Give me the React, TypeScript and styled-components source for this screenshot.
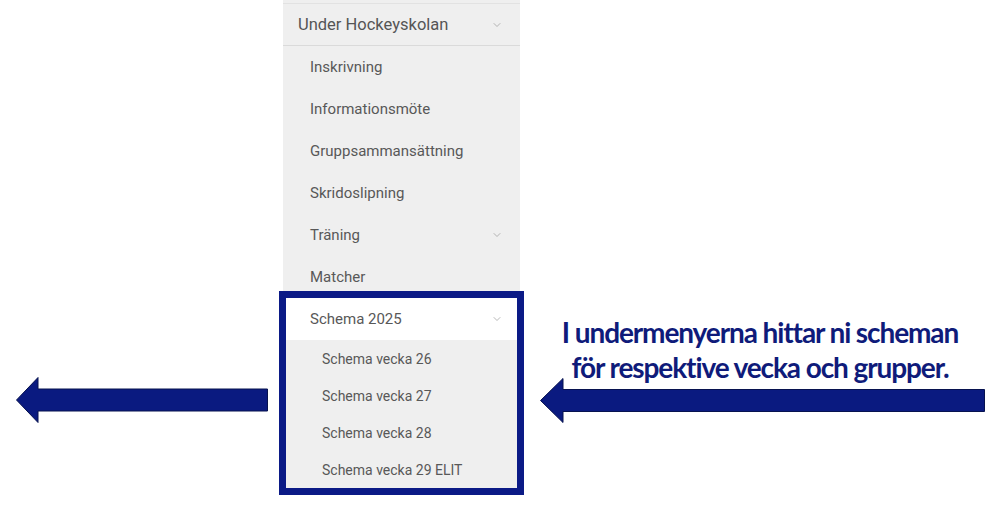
import styled, { createGlobalStyle } from "styled-components";
import { ChevronDown } from "lucide-react";

// GLOBAL
const GlobalStyle = createGlobalStyle`
  html, body {
    margin: 0;
    padding: 0;
    background: #fff;
  }
  body {
    font-family: Roboto, "Liberation Sans", sans-serif;
  }
`;

// STYLED
const Page = styled.div`
  display: grid;
  grid-template-columns: 283px 237px 1fr;
  width: 1000px;
  height: 517px;
  overflow: hidden;
`;

const LeftSlot = styled.div`
  padding: 377px 0 0 16px;
`;

const Panel = styled.nav`
  align-self: start;
  background: #efefef;
  padding-top: 3px;
`;

const TopRow = styled.div`
  box-sizing: border-box;
  height: 43px;
  display: flex;
  align-items: center;
  justify-content: space-between;
  padding: 0 17px 0 15px;
  border-top: 1px solid #e2e2e2;
  border-bottom: 1px solid #dadada;
  font-size: 16.5px;
  color: #555;
`;

const Item = styled.div<{ $indent: number; $height: number; $active?: boolean; $size: number }>`
  box-sizing: border-box;
  height: ${(p) => p.$height}px;
  display: flex;
  align-items: center;
  justify-content: space-between;
  padding: 0 ${(p) => (p.$active ? 14 : 17)}px 0 ${(p) => p.$indent}px;
  background: ${(p) => (p.$active ? "#fff" : "transparent")};
  font-size: ${(p) => p.$size}px;
  color: #585858;
`;

const Highlight = styled.div`
  margin: -7px -4px 0;
  border: 7px solid #0b1a86;
  position: relative;
`;

const Callout = styled.div`
  padding-top: 315px;
  display: flex;
  flex-direction: column;
`;

const CalloutText = styled.p`
  margin: 0;
  text-align: center;
  white-space: nowrap;
  font-family: Lato, "Liberation Sans", sans-serif;
  font-weight: 700;
  font-size: 28px;
  letter-spacing: -1.1px;
  line-height: 35px;
  color: #0f1b7a;
`;

const ArrowSvg = styled.svg`
  display: block;
  overflow: visible;
`;

const RightArrowWrap = styled.div`
  margin: -7px 0 0 20px;
`;

const Chevron = () => <ChevronDown size={12} strokeWidth={1.4} color="#9a9a9a" />;

type ArrowProps = { width: number; height: number; head: number; shaft: number };

const Arrow = ({ width, height, head, shaft }: ArrowProps) => {
  const mid = height / 2;
  const t = mid - shaft / 2;
  const b = mid + shaft / 2;
  return (
    <ArrowSvg width={width} height={height} viewBox={`0 0 ${width} ${height}`}>
      <path
        d={`M0.5 ${mid} L${head} 0.5 L${head} ${t} L${width - 0.5} ${t} L${width - 0.5} ${b} L${head} ${b} L${head} ${height - 0.5} Z`}
        fill="#0a1a80"
        stroke="#07124f"
        strokeWidth={1}
      />
    </ArrowSvg>
  );
};

const mainItems: { label: string; sub?: boolean }[] = [
  { label: "Inskrivning" },
  { label: "Informationsmöte" },
  { label: "Gruppsammansättning" },
  { label: "Skridoslipning" },
  { label: "Träning", sub: true },
  { label: "Matcher" },
];

const weeks = ["Schema vecka 26", "Schema vecka 27", "Schema vecka 28", "Schema vecka 29 ELIT"];

const App = () => {
  return (
    <>
      <GlobalStyle />
      <Page>
        <LeftSlot>
          <Arrow width={252} height={46} head={22} shaft={22} />
        </LeftSlot>
        <Panel>
          <TopRow>
            <span>Under Hockeyskolan</span>
            <Chevron />
          </TopRow>
          {mainItems.map((item) => (
            <Item key={item.label} $indent={27} $height={42} $size={15}>
              <span>{item.label}</span>
              {item.sub && <Chevron />}
            </Item>
          ))}
          <Highlight>
            <Item $indent={24} $height={42} $size={15} $active>
              <span>Schema 2025</span>
              <Chevron />
            </Item>
            {weeks.map((w) => (
              <Item key={w} $indent={36} $height={37} $size={14}>
                <span>{w}</span>
              </Item>
            ))}
          </Highlight>
        </Panel>
        <Callout>
          <CalloutText>
            I undermenyerna hittar ni scheman
            <br />
            för respektive vecka och grupper.
          </CalloutText>
          <RightArrowWrap>
            <Arrow width={445} height={45} head={23} shaft={22} />
          </RightArrowWrap>
        </Callout>
      </Page>
    </>
  );
};

export default App;
